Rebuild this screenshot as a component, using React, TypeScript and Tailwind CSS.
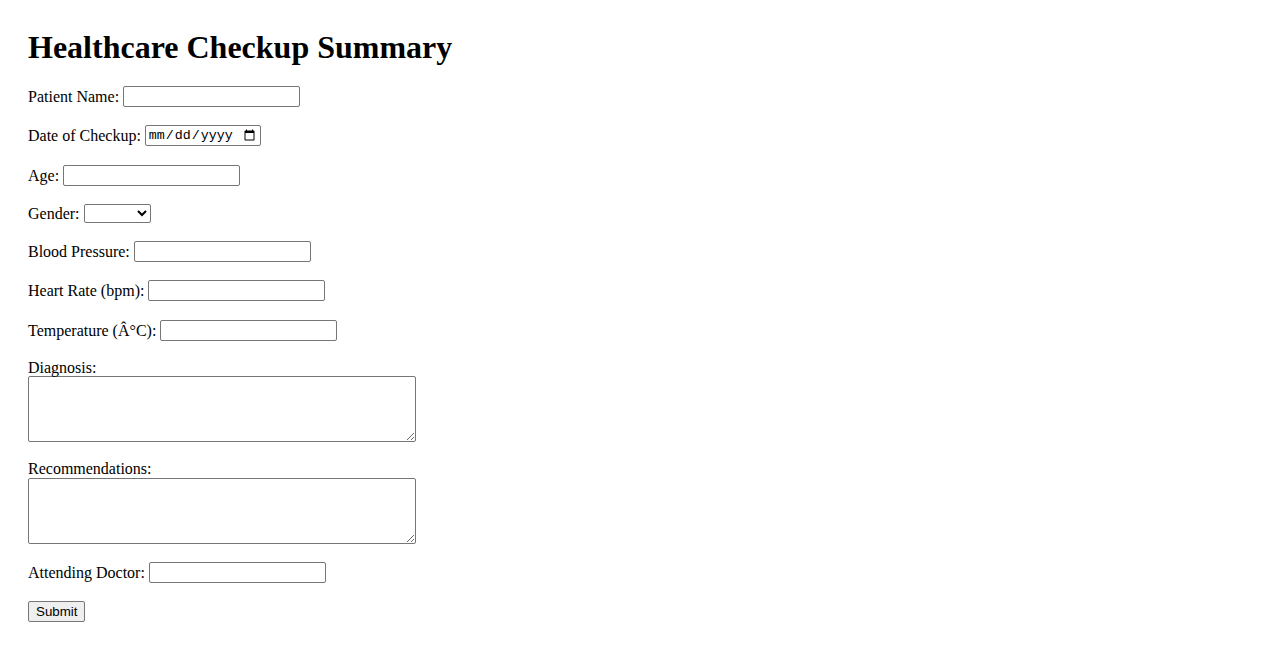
import React from 'react';

const inputCls =
  "w-[177px] h-[21px] border border-[#767676] rounded-[2px] bg-white px-[3px] py-[2px] font-['Liberation_Sans',sans-serif] text-[13.33px] leading-normal";

const textareaCls =
  "block w-[388px] h-[66px] border border-[#767676] rounded-[2px] bg-white px-[3px] py-[3px] font-['Liberation_Mono',monospace] text-[13.33px]";

const Row = ({ label, children }: { label: string; children: React.ReactNode }) => (
  <div className="flex h-[21.3px] items-center gap-[4px]">
    <label className="pt-[1px]">{label}</label>
    {children}
  </div>
);

export default function App() {
  return (
    <div className="min-h-screen bg-white px-[28px] pt-[29px] font-['Liberation_Serif',serif] text-[16px] leading-normal text-black">
      <h1 className="mb-[20px] text-[32px] font-bold leading-[37px]">Healthcare Checkup Summary</h1>
      <form className="flex flex-col gap-[18px]" onSubmit={(e) => e.preventDefault()}>
        <Row label="Patient Name:">
          <input type="text" className={inputCls} />
        </Row>
        <Row label="Date of Checkup:">
          <input
            type="date"
            className="w-[116px] h-[21px] border border-[#767676] rounded-[2px] bg-white px-[2px] py-[1px] font-['Liberation_Mono',monospace] text-[13.33px]"
          />
        </Row>
        <Row label="Age:">
          <input type="number" className={inputCls} />
        </Row>
        <div className="flex h-[19px] items-center gap-[4px]">
          <label className="pt-[1px]">Gender:</label>
          <select className="w-[67px] h-[19px] border border-[#767676] rounded-[2px] bg-white font-['Liberation_Sans',sans-serif] text-[13.33px]">
            <option value=""></option>
            <option>Male</option>
            <option>Female</option>
            <option>Other</option>
          </select>
        </div>
        <Row label="Blood Pressure:">
          <input type="text" className={inputCls} />
        </Row>
        <Row label="Heart Rate (bpm):">
          <input type="number" className={inputCls} />
        </Row>
        <Row label="Temperature (Â°C):">
          <input type="number" className={inputCls} />
        </Row>
        <div>
          <label className="block leading-[17.6px]">Diagnosis:</label>
          <textarea className={textareaCls} />
        </div>
        <div>
          <label className="block leading-[17.6px]">Recommendations:</label>
          <textarea className={textareaCls} />
        </div>
        <Row label="Attending Doctor:">
          <input type="text" className={inputCls} />
        </Row>
        <div className="-mt-[2px]">
          <button
            type="submit"
            className="h-[21px] border border-[#767676] rounded-[2px] bg-[#efefef] px-[7px] font-['Liberation_Sans',sans-serif] text-[13.33px] leading-none"
          >
            Submit
          </button>
        </div>
      </form>
    </div>
  );
}
